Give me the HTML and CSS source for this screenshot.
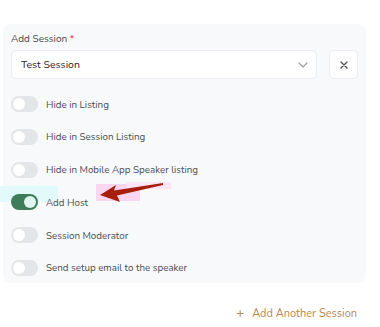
FILE: index.html
```html
<!DOCTYPE html>
<html lang="en">
<head>
  <meta charset="UTF-8">
  <meta name="viewport" content="width=device-width, initial-scale=1.0">
  <title>Add Session</title>
  <link rel="stylesheet" href="styles.css">
</head>
<body>
  <div class="card">
    <label class="field-label">Add Session <span class="req">*</span></label>
    <div class="select-row">
      <div class="select">
        <span>Test Session</span>
        <svg class="chevron" width="10" height="6" viewBox="0 0 10 6"><path d="M1 1l4 4 4-4" fill="none" stroke="#9aa0a8" stroke-width="1.2" stroke-linecap="round"/></svg>
      </div>
      <button class="remove-btn">
        <svg width="8" height="8" viewBox="0 0 8 8"><path d="M1 1l6 6M7 1L1 7" stroke="#555" stroke-width="1.4" stroke-linecap="round"/></svg>
      </button>
    </div>

    <div class="toggles">
      <div class="toggle-row"><span class="toggle"></span><span>Hide in Listing</span></div>
      <div class="toggle-row"><span class="toggle"></span><span>Hide in Session Listing</span></div>
      <div class="toggle-row"><span class="toggle"></span><span>Hide in Mobile App Speaker listing</span></div>
      <div class="toggle-row host">
        <span class="hl-cyan"></span>
        <span class="toggle on"></span><span class="text">Add Host</span>
        <span class="hl-pink"></span>
        <span class="hl-pink2"></span>
        <svg class="arrow" width="66" height="22" viewBox="0 0 66 22">
          <path d="M1 13 L17 3 L15 8.5 L64 1 L64 3 L18 13.5 L21 20 Z" fill="#a61e0c"/>
        </svg>
      </div>
      <div class="toggle-row"><span class="toggle"></span><span>Session Moderator</span></div>
      <div class="toggle-row"><span class="toggle"></span><span>Send setup email to the speaker</span></div>
    </div>
  </div>

  <div class="footer">
    <a href="#" class="add-link"><span class="plus">+</span> Add Another Session</a>
  </div>
</body>
</html>
```

FILE: styles.css
```css
body {
  margin: 0;
  background: #fff;
  font-family: "Nunito", "Lato", sans-serif;
  color: #3a3d42;
}
.card {
  width: 347px;
  margin: 24px 0 0 3px;
  padding: 8px 8px 7px 8px;
  background: #f8f9fb;
  border-radius: 8px;
}
.field-label {
  display: block;
  font-size: 10px;
  color: #44474d;
  line-height: 14px;
}
.req {
  color: #e5283a;
}
.select-row {
  display: flex;
  gap: 12px;
  margin-top: 4px;
}
.select {
  flex: 1;
  height: 29px;
  box-sizing: border-box;
  display: flex;
  align-items: center;
  justify-content: space-between;
  padding: 0 8px 0 9px;
  background: #fff;
  border: 1px solid #eceef1;
  border-radius: 5px;
  font-size: 10.5px;
  font-weight: 400;
  color: #1f2226;
}
.remove-btn {
  width: 29px;
  height: 29px;
  padding: 0;
  border: 1px solid #eceef1;
  border-radius: 5px;
  background: #fff;
  display: flex;
  align-items: center;
  justify-content: center;
}
.toggles {
  display: flex;
  flex-direction: column;
  gap: 16.8px;
  margin-top: 17px;
}
.toggle-row {
  position: relative;
  display: flex;
  align-items: center;
  gap: 8px;
  height: 16px;
  font-size: 9.8px;
  color: #4a4d52;
}
.toggle {
  position: relative;
  width: 27px;
  height: 16px;
  border-radius: 8px;
  background: #e3e5e9;
  flex-shrink: 0;
  z-index: 1;
}
.toggle::after {
  content: "";
  position: absolute;
  left: 2px;
  top: 2px;
  width: 12px;
  height: 12px;
  border-radius: 50%;
  background: #fff;
}
.toggle.on {
  background: #3f7d5a;
}
.toggle.on::after {
  left: 13px;
  background: #dff7ee;
}
.host .text {
  position: relative;
  z-index: 1;
}
.hl-cyan {
  position: absolute;
  left: -11px;
  top: -8px;
  width: 58px;
  height: 16px;
  background: #e2fafa;
}
.hl-pink {
  position: absolute;
  left: 85px;
  top: -10px;
  width: 44px;
  height: 17px;
  background: #fbd6f0;
}
.hl-pink2 {
  position: absolute;
  left: 115px;
  top: -12px;
  width: 45px;
  height: 7px;
  background: #fde4f6;
}
.arrow {
  position: absolute;
  left: 88px;
  top: -12px;
  z-index: 2;
}
.footer {
  display: flex;
  justify-content: flex-end;
  padding: 23px 23px 0 0;
}
.add-link {
  font-size: 11px;
  color: #b8864f;
  text-decoration: none;
  line-height: 14px;
}
.plus {
  font-size: 14px;
  margin-right: 5px;
}
```
